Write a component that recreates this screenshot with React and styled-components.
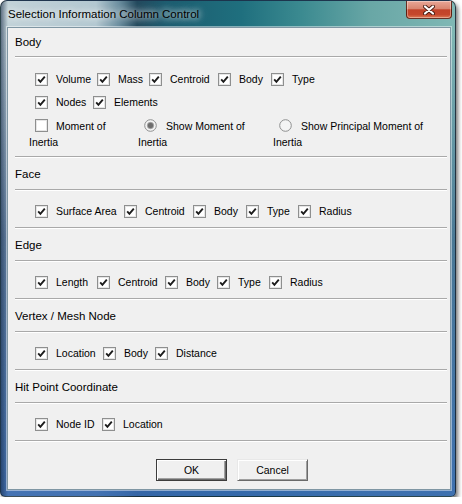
import React from "react"
import styled, { createGlobalStyle } from "styled-components"

const GlobalStyle = createGlobalStyle`
  html, body {
    margin: 0;
    padding: 0;
    background: #ffffff;
  }
  body {
    font-family: "Liberation Sans", Arial, sans-serif;
  }
`;

const sections = [
  {
    title: "Face",
    items: [["Surface Area", 89], ["Centroid", 69], ["Body", 53], ["Type", 52], ["Radius"]]
  },
  {
    title: "Edge",
    items: [["Length", 62], ["Centroid", 68], ["Body", 52], ["Type", 52], ["Radius"]]
  },
  {
    title: "Vertex / Mesh Node",
    items: [["Location", 68], ["Body", 52], ["Distance"]]
  },
  {
    title: "Hit Point Coordinate",
    items: [["Node ID", 67], ["Location"]]
  }
];

function CheckBox({ checked }) {
  return (
    <BoxSvg width="13" height="13" viewBox="0 0 13 13">
      <rect x="0.5" y="0.5" width="12" height="12" fill="#ffffff" stroke="#8e8f8f" />
      <rect x="1.5" y="1.5" width="10" height="10" fill="none" stroke="#e6e6e6" />
      {checked && (
        <path d="M3.2 6.4 L5.4 8.8 L9.8 3.6" fill="none" stroke="#1c1c1c" strokeWidth="1.9" />
      )}
    </BoxSvg>
  );
}

function Radio({ checked }) {
  return (
    <BoxSvg width="13" height="13" viewBox="0 0 13 13">
      <circle cx="6.5" cy="6.5" r="5.8" fill="#f4f4f4" stroke="#8e8f8f" strokeWidth="1" />
      {checked && <circle cx="6.5" cy="6.5" r="3.2" fill="#6d6d6d" stroke="#a8a8a8" strokeWidth="0.8" />}
    </BoxSvg>
  );
}

function Option({ label, width, checked = true }) {
  return (
    <Item $width={width}>
      <CheckBox checked={checked} />
      <Label>{label}</Label>
    </Item>
  );
}

function App() {
  return (
    <>
      <GlobalStyle />
      <Window>
        <TitleBar>
          <Title>Selection Information Column Control</Title>
          <CloseButton>
            <svg width="12" height="10" viewBox="0 0 12 10">
              <path d="M2 1.5 L10 8.5 M10 1.5 L2 8.5" stroke="#4a1c12" strokeWidth="4" strokeLinecap="round" />
              <path d="M2 1.5 L10 8.5 M10 1.5 L2 8.5" stroke="#ffffff" strokeWidth="2.2" strokeLinecap="round" />
            </svg>
          </CloseButton>
        </TitleBar>

        <Client>
          <Heading $first>Body</Heading>
          <Divider />
          <Row $top={12}>
            <Option label="Volume" width={62} />
            <Option label="Mass" width={52} />
            <Option label="Centroid" width={69} />
            <Option label="Body" width={53} />
            <Option label="Type" />
          </Row>
          <Row $top={5}>
            <Option label="Nodes" width={58} />
            <Option label="Elements" />
          </Row>
          <WrapRow>
            <WrapOption $width={109}>
              <CheckBox checked={false} />
              <WrapGap />Moment of<br />Inertia
            </WrapOption>
            <WrapOption $width={135}>
              <Radio checked />
              <WrapGap $wide />Show Moment of<br />Inertia
            </WrapOption>
            <WrapOption>
              <Radio />
              <WrapGap $wide />Show Principal Moment of<br />Inertia
            </WrapOption>
          </WrapRow>
          <Divider $top={6} />

          {sections.map(section => (
            <React.Fragment key={section.title}>
              <Heading>{section.title}</Heading>
              <Divider $top={7} />
              <Row $top={11}>
                {section.items.map(([label, width], i) => (
                  <Option key={i} label={label} width={width} />
                ))}
              </Row>
              <Divider $top={7} />
            </React.Fragment>
          ))}

          <Buttons>
            <Button $default>OK</Button>
            <Button>Cancel</Button>
          </Buttons>
        </Client>
      </Window>
    </>
  );
}

export default App;


const Window = styled.div`
  box-sizing: border-box;
  width: 456px;
  height: 497px;
  display: flex;
  flex-direction: column;
  padding: 0 4px 6px 6px;
  border: 1px solid rgba(20, 35, 45, 0.75);
  border-radius: 7px 7px 5px 5px;
  box-shadow: 2px 3px 4px rgba(0, 0, 0, 0.55);
  background:
    linear-gradient(90deg, rgba(15, 35, 65, 0.55) 0px, rgba(15, 35, 65, 0) 7px),
    linear-gradient(180deg, rgba(0, 0, 0, 0) 0px, rgba(0, 0, 0, 0) 30px, rgba(30, 70, 125, 0.55) 240px, rgba(55, 105, 175, 0.9) 100%),
    linear-gradient(90deg, #c3d3d9 0px, #b3c8d1 95px, #6b8e9f 118px, #23495d 136px, #1c5c6f 165px, #1f6f7e 240px, #3b8a90 300px, #69a7a6 370px, #80b8b5 456px);
`;

const TitleBar = styled.div`
  display: flex;
  align-items: flex-start;
  height: 26px;
  margin: 0 -4px 0 -6px;
`;

const Title = styled.div`
  padding: 5px 0 0 7px;
  font-size: 11.5px;
  line-height: 16px;
  color: #000000;
  text-shadow: 0 0 6px rgba(255, 255, 255, 0.95), 0 0 10px rgba(255, 255, 255, 0.8);
`;

const CloseButton = styled.div`
  margin-left: auto;
  margin-right: 3px;
  width: 44px;
  height: 17px;
  display: flex;
  align-items: center;
  justify-content: center;
  border: 1px solid rgba(70, 20, 10, 0.8);
  border-top: none;
  border-radius: 0 0 4px 4px;
  background: linear-gradient(180deg, #e9a797 0%, #d98570 45%, #c2432a 52%, #c5472c 80%, #de7a55 100%);
  box-shadow: inset 0 0 0 1px rgba(255, 255, 255, 0.35);
`;

const Client = styled.div`
  flex: 1;
  display: flex;
  flex-direction: column;
  padding: 6px 3px 0 7px;
  background: #f0f0f0;
  border: 1px solid #7f96a3;
  box-shadow: 0 0 0 1px rgba(255, 255, 255, 0.45);
`;

const Heading = styled.div`
  margin-top: ${p => (p.$first ? 0 : 8)}px;
  font-size: 11.5px;
  line-height: 16px;
  color: #000000;
`;

const Divider = styled.div`
  height: 1px;
  margin-top: ${p => p.$top ?? 6}px;
  background: #a9a9a9;
  border-bottom: 1px solid #ffffff;
`;

const Row = styled.div`
  display: flex;
  align-items: center;
  height: 18px;
  margin-top: ${p => p.$top}px;
  padding-left: 20px;
`;

const Item = styled.div`
  display: flex;
  align-items: center;
  flex: 0 0 auto;
  width: ${p => (p.$width ? `${p.$width}px` : "auto")};
`;

const BoxSvg = styled.svg`
  display: block;
  flex: 0 0 auto;
`;

const Label = styled.span`
  margin-left: 8px;
  font-size: 10.5px;
  color: #000000;
  white-space: nowrap;
`;

const WrapRow = styled.div`
  display: flex;
  margin-top: 7px;
  padding-left: 14px;
`;

const WrapOption = styled.div`
  flex: 0 0 auto;
  width: ${p => (p.$width ? `${p.$width}px` : "auto")};
  font-size: 10.5px;
  line-height: 16px;
  color: #000000;

  & > svg {
    display: inline-block;
    vertical-align: -2px;
    margin-left: 6px;
  }
`;

const WrapGap = styled.span`
  display: inline-block;
  width: ${p => (p.$wide ? 9 : 8)}px;
`;

const Buttons = styled.div`
  display: flex;
  justify-content: center;
  gap: 10px;
  margin-top: 17px;
  padding-left: 2px;
`;

const Button = styled.div`
  box-sizing: border-box;
  width: 71px;
  height: 22px;
  display: flex;
  align-items: center;
  justify-content: center;
  font-size: 10.5px;
  color: #000000;
  background: #f0f0f0;
  border: 1px solid;
  border-color: ${p => (p.$default ? "#3c3c3c" : "#e8e8e8 #6a6a6a #6a6a6a #e8e8e8")};
  box-shadow: ${p =>
    p.$default
      ? "inset 1px 1px 0 #ffffff, inset -1px -1px 0 #6a6a6a, inset -2px -2px 0 #a0a0a0"
      : "inset 1px 1px 0 #ffffff, inset -1px -1px 0 #a0a0a0"};
`;
